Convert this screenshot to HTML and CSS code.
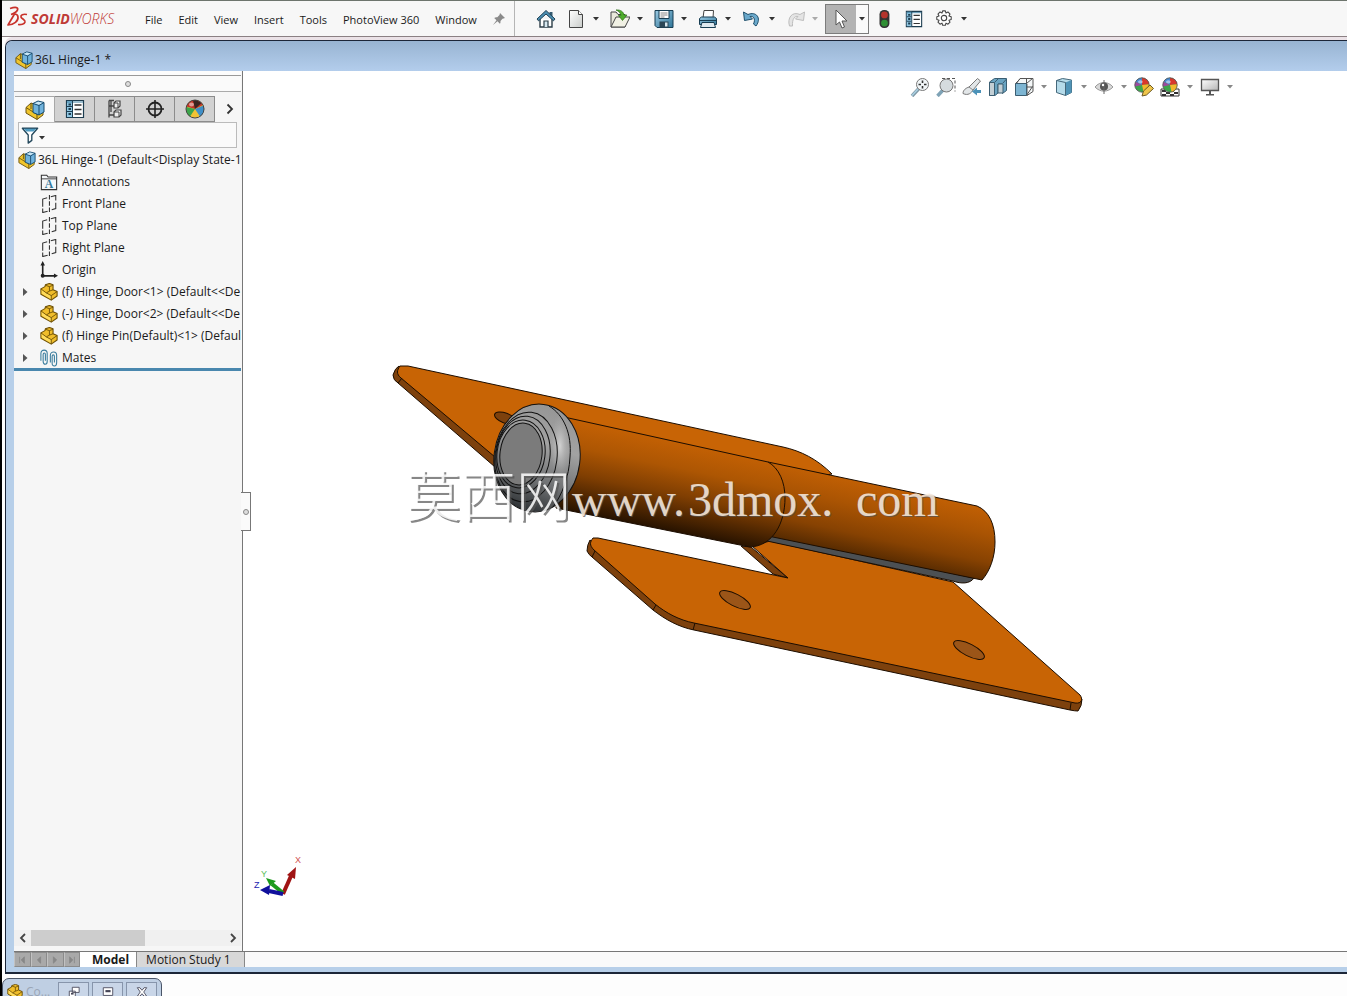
FILE: index.html
```
<!DOCTYPE html>
<html lang="en">
<head>
<meta charset="utf-8">
<title>SOLIDWORKS - 36L Hinge-1</title>
<link rel="stylesheet" href="styles.css">
</head>
<body>
<svg class="defs" aria-hidden="true">
  <defs>
    <linearGradient id="gPage" x1="0" y1="0" x2="1" y2="1"><stop offset="0" stop-color="#fff"/><stop offset="1" stop-color="#c9ccca"/></linearGradient>
    <linearGradient id="gBlue" x1="0" y1="0" x2="1" y2="1"><stop offset="0" stop-color="#9ccbe4"/><stop offset="1" stop-color="#2f7598"/></linearGradient>
    <linearGradient id="gScreen" x1="0" y1="0" x2="1" y2="1"><stop offset="0" stop-color="#fff"/><stop offset="1" stop-color="#b5b5b5"/></linearGradient>
    <symbol id="part" viewBox="0 0 20 20">
      <path d="M1 6.500L5.500 4l.5-2 4.500-1.500 4 1.500v5.500l4.500 2v5L12.500 19 1 12.500z" fill="#f0bd2a" stroke="#6d5006" stroke-width="1.200" stroke-linejoin="round"/>
      <path d="M1.800 7.500l5.200 3.500 5.500 3v4L2 12z" fill="#ffdc5c"/>
      <path d="M6 2.500l4.500 1.500v5L7 11 1 6.500M10.500 4l4-1.500M10.500 9l4-1.500M7 11l5.500 3 6.500-4.500M12.500 14v5" fill="none" stroke="#6d5006"/>
    </symbol>
    <symbol id="assembly" viewBox="0 0 20 20">
      <path d="M1 7.500L6 3l3 1v4l9 3v4l-6 4.500-11-6.500z" fill="#f0c52c" stroke="#6d5510" stroke-linejoin="round"/>
      <path d="M1 7.500l8 5 3 2v5M6 3v6" fill="none" stroke="#6d5510"/>
      <path d="M8 3.500l5-2.500 6 1.500v9.500l-5 3-6-2.500z" fill="#6fb2dc" stroke="#174a6c" stroke-linejoin="round"/>
      <path d="M8.800 3.700l4.300-2 5 1.200-4.500 2.200z" fill="#c9e6f5"/>
      <path d="M8 3.500l6 2 5-3M14 5.500V15" fill="none" stroke="#174a6c"/>
    </symbol>
    <symbol id="plane" viewBox="0 0 20 20">
      <path d="M3 13V4.500l5-1.500M12 2l5.500-1.500V6M17.500 8.500V15L13 16.500M8.500 18L3 19.500V15" fill="none" stroke="#333" stroke-width="1.200"/>
      <path d="M10.500 0v20" stroke="#333" stroke-width="1.200" stroke-dasharray="5 2"/>
    </symbol>
    <symbol id="list" viewBox="0 0 20 20">
      <path d="M1.500 1.500h17v17h-17z" fill="#fff" stroke="#1d3d50" stroke-width="1.200"/>
      <path d="M2 2h5.500v16H2z" fill="#8fc6e2"/>
      <path d="M2 3h16" stroke="#3c7ea0"/>
      <path d="M7.500 2v16M2 7.500h5M2 12.500h5" stroke="#1d3d50"/>
      <path d="M3.500 5.500H6M3.500 10H6M3.500 15H6" stroke="#1d3d50" stroke-width="2"/>
      <path d="M9.500 6h7M9.500 10.500h7M9.500 15h7" stroke="#333" stroke-width="1.300"/>
    </symbol>
    <symbol id="ball" viewBox="0 0 20 20">
      <circle cx="10" cy="10" r="9" fill="#3ca64b"/>
      <path d="M10 10L2 6a9 9 0 0 1 8-5z" fill="#4888d0"/>
      <path d="M10 10V1a9 9 0 0 1 9 8z" fill="#d8382c"/>
      <path d="M10 10l9-1a9 9 0 0 1-7 10z" fill="#f1b92c"/>
      <path d="M10 10L2 6a9 9 0 0 0-1 6z" fill="#9c4aa0"/>
      <ellipse cx="8" cy="6" rx="3" ry="2" fill="#fff" opacity=".5"/>
      <circle cx="10" cy="10" r="9" fill="none" stroke="#555"/>
    </symbol>
    <symbol id="ball-dark" viewBox="0 0 20 20">
      <circle cx="10" cy="10" r="9" fill="#f1c234"/>
      <path d="M10 10L1.500 7.500C3 3 6.500 1 10 1c3 0 6 1.500 8 5z" fill="#c23428"/>
      <path d="M10 10L8 1.500l3-.5 5.500 3z" fill="#3b2420"/>
      <path d="M10 10l8.500-3.500A9 9 0 0 1 15 17.500z" fill="#3f8fc8"/>
      <path d="M10 10L1.500 8A9 9 0 0 0 5 17.500z" fill="#3ca64b"/>
      <ellipse cx="6.500" cy="5.500" rx="2.500" ry="2" fill="#fff" opacity=".5"/>
      <circle cx="10" cy="10" r="9" fill="none" stroke="#444"/>
    </symbol>
    <symbol id="caret" viewBox="0 0 6 4"><path d="M0 0h6L3 3.500z" fill="currentColor"/></symbol>
    <symbol id="arrow-r" viewBox="0 0 6 8"><path d="M1 0l4.500 4L1 8z" fill="#555"/></symbol>
  </defs>
</svg>

<header class="menubar">
  <div class="brand">
    <svg class="brand-mark" viewBox="0 0 22 22"><g fill="none" stroke="#c8322b" stroke-width="1.700" stroke-linejoin="round"><path d="M4 2.500c6-2 8.500-1 7.500 1.500-1 2-3.500 3.500-6.500 4.500"/><path d="M8.500 8L2 19c6-.5 10.500-4 10-8-.2-2-1.500-3-3.500-3"/><path d="M21 8.500c-4-.7-6.500.3-6 2.500.5 2 4.500 2.500 4 5-.5 2-4 3-7 2.500"/></g></svg>
    <span class="brand-name"><b>SOLID</b>WORKS</span>
  </div>
  <nav class="menus">
    <button>File</button><button>Edit</button><button>View</button><button>Insert</button><button>Tools</button><button>PhotoView 360</button><button>Window</button>
  </nav>
  <button class="pin" aria-label="Pin menu"><svg viewBox="0 0 14 14"><path d="M8 1l5 5-1.500.5-1 .2L8.500 9c0 1.500 0 2-.6 2.800L5.500 9.300 1 13l3.500-4.800L2.200 6C3.500 5 4 5 5.300 5.300L7.500 3z" fill="#8a8a8a"/></svg></button>
  <div class="tools">
    <button class="ico home" aria-label="Home"><svg viewBox="0 0 20 20"><path d="M4 10v8h12v-8" fill="#fff" stroke="#2c3e48" stroke-width="1.400"/><path d="M8 18v-6h4v6" fill="#d7e8f0" stroke="#2c3e48" stroke-width="1.200"/><path d="M13.500 3h3v5h-3z" fill="#355a70"/><path d="M10 1.500L19 10l-1.500 1.800L10 5l-7.500 6.800L1 10z" fill="#4d8fb2" stroke="#1f4256"/></svg></button>
    <div class="pair"><button class="ico" aria-label="New"><svg viewBox="0 0 20 20"><path d="M3.500 1.500h9l4 4v13h-13z" fill="url(#gPage)" stroke="#444"/><path d="M12.500 1.500v4h4" fill="#fff" stroke="#444"/></svg></button><button class="drop" aria-label="New options"><svg><use href="#caret"/></svg></button></div>
    <div class="pair"><button class="ico" aria-label="Open"><svg viewBox="0 0 20 20"><path d="M1 18V3h5l2 2.500h7V18z" fill="#e9e9dc" stroke="#444"/><path d="M1 18L6 8h14l-5 10z" fill="#f1f1e4" stroke="#444" stroke-linejoin="round"/><path d="M6 1c5-.5 7.500 2 8 5h3l-4.500 5.500L8.500 6.500H11C10.500 4 9 2 6 1z" fill="#4fae2c" stroke="#2b7015" stroke-width=".7"/></svg></button><button class="drop" aria-label="Open options"><svg><use href="#caret"/></svg></button></div>
    <div class="pair"><button class="ico" aria-label="Save"><svg viewBox="0 0 20 20"><path d="M1 1.500h18v17H3l-2-2z" fill="url(#gBlue)" stroke="#173d52"/><path d="M5 1.500h10v8H5z" fill="#fff" stroke="#173d52"/><path d="M6.500 4h7M6.500 6h7M6.500 8h4" stroke="#888"/><path d="M5.500 12.500h9v6h-9z" fill="#2b4656"/><path d="M11 13.500h2.500v4H11z" fill="#d6e6ee"/></svg></button><button class="drop" aria-label="Save options"><svg><use href="#caret"/></svg></button></div>
    <div class="pair"><button class="ico" aria-label="Print"><svg viewBox="0 0 20 20"><path d="M5 9l1-7.500h9.500L15 9z" fill="#fff" stroke="#444"/><path d="M1.500 9.500l2-1.500h13l2 1.500v6h-17z" fill="url(#gBlue)" stroke="#173d52"/><path d="M4 13.500h12l1.500 5h-15z" fill="#dfeaf0" stroke="#173d52"/><path d="M2 11.500h16" stroke="#173d52"/></svg></button><button class="drop" aria-label="Print options"><svg><use href="#caret"/></svg></button></div>
    <div class="pair"><button class="ico" aria-label="Undo"><svg viewBox="0 0 20 20"><path d="M1.500 3l1 8.500 8-1.500-2.500-2.500c3-.8 6 2 3.500 7.500l2.500 2C20 9 14 2 6 5.500z" fill="#6aa9cc" stroke="#1f4f6b" stroke-linejoin="round"/></svg></button><button class="drop" aria-label="Undo options"><svg><use href="#caret"/></svg></button></div>
    <div class="pair off"><button class="ico" aria-label="Redo" disabled><svg viewBox="0 0 20 20"><path d="M18.500 3l-1 8.500-8-1.500L12 7.500C9 6.700 6 9.500 6.500 17h-3C1 9 6 2 14 5.500z" fill="#e4e4e4" stroke="#bdbdbd" stroke-linejoin="round"/></svg></button><button class="drop" aria-label="Redo options" disabled><svg><use href="#caret"/></svg></button></div>
    <div class="select-box"><button class="ico" aria-label="Select"><svg viewBox="0 0 20 20"><path d="M5 1v15l3.500-3 2.500 6 2.500-1-2.500-6h5z" fill="#fff" stroke="#555"/></svg></button><button class="drop" aria-label="Select options"><svg><use href="#caret"/></svg></button></div>
    <div class="extra">
      <button class="ico" aria-label="Rebuild"><svg viewBox="0 0 20 20"><rect x="5" y="0" width="11" height="20" rx="5" fill="#333"/><circle cx="10.500" cy="5.500" r="3.800" fill="#b5342c"/><circle cx="10.500" cy="14.500" r="3.800" fill="#2f8f34"/></svg></button>
      <button class="ico" aria-label="File properties"><svg><use href="#list"/></svg></button>
      <span class="pair"><button class="ico" aria-label="Options"><svg viewBox="0 0 20 20"><path d="M8.500 1h3l.7 2.400 2.200-1.200 2.300 2.300-1.200 2.200 2.500.8v3l-2.500.8 1.200 2.200-2.300 2.300-2.200-1.200-.7 2.400h-3l-.7-2.400-2.200 1.200-2.300-2.300 1.200-2.200L2 10.500v-3l2.500-.8-1.200-2.200 2.300-2.300 2.200 1.200z" fill="#fff" stroke="#444" stroke-width="1.200" stroke-linejoin="round"/><circle cx="10" cy="9" r="3" fill="#fff" stroke="#444" stroke-width="1.200"/></svg></button><button class="drop" aria-label="Options menu"><svg><use href="#caret"/></svg></button></span>
    </div>
  </div>
</header>

<main class="window">
  <div class="titlebar"><svg><use href="#assembly"/></svg><h1>36L Hinge-1 *</h1></div>
  <div class="content">
    <aside class="panel">
      <div class="edge"></div>
      <div class="grip"><i></i></div>
      <div class="tabs" role="tablist">
        <button class="tab active" aria-label="Feature tree"><svg><use href="#assembly"/></svg></button>
        <button class="tab" aria-label="Property manager"><svg><use href="#list"/></svg></button>
        <button class="tab" aria-label="Configurations"><svg viewBox="0 0 20 20"><path d="M4 1.500h5M4 1.500v17M4 7h5M4 16h5M6 1.500V13" stroke="#444" fill="none" stroke-width="1.300"/><path d="M9 4l2-2h4v5l-2 2H9zM9 13l2-2h5v5l-2 2H9z" fill="#eee" stroke="#444" stroke-width="1.200"/><path d="M9 4h4v5M9 13h5v5" fill="none" stroke="#444"/></svg></button>
        <button class="tab" aria-label="Dimensions"><svg viewBox="0 0 20 20"><circle cx="10" cy="10" r="6.500" fill="none" stroke="#222" stroke-width="1.800"/><path d="M10 1v18M1 10h18" stroke="#222" stroke-width="1.600"/></svg></button>
        <button class="tab" aria-label="Display"><svg><use href="#ball-dark"/></svg></button>
        <button class="more" aria-label="More tabs"><svg viewBox="0 0 8 12"><path d="M1.500 1.500L6 6l-4.500 4.500" fill="none" stroke="#333" stroke-width="1.800"/></svg></button>
      </div>
      <label class="filter"><svg class="funnel" viewBox="0 0 20 20"><path d="M1.500 2.500h17L12 10v6l-4 3v-9z" fill="#fff" stroke="#24485c" stroke-width="1.500" stroke-linejoin="round"/><path d="M3 3h14l-3 3H6z" fill="#4f9cc2"/></svg><svg class="car"><use href="#caret"/></svg><input type="text" aria-label="Filter tree"></label>
      <ul class="tree">
        <li class="root"><svg class="n"><use href="#assembly"/></svg><span>36L Hinge-1 (Default&lt;Display State-1</span></li>
        <li><b></b><svg class="n" viewBox="0 0 20 20"><path d="M1.500 18.500v-16h6l1.500 2h9.500v14z" fill="#f4f7f9" stroke="#333" stroke-width="1.200"/><path d="M1.500 6.500h17" stroke="#333"/><text x="10" y="17" class="a-mark">A</text></svg><span>Annotations</span></li>
        <li><b></b><svg class="n"><use href="#plane"/></svg><span>Front Plane</span></li>
        <li><b></b><svg class="n"><use href="#plane"/></svg><span>Top Plane</span></li>
        <li><b></b><svg class="n"><use href="#plane"/></svg><span>Right Plane</span></li>
        <li><b></b><svg class="n" viewBox="0 0 20 20"><path d="M3 4v12.500h13" fill="none" stroke="#222" stroke-width="1.800"/><path d="M3 0l2.500 5h-5zM20 16.500L15.500 14v5z" fill="#222"/><circle cx="3" cy="16.500" r="2.200" fill="#222"/></svg><span>Origin</span></li>
        <li><b><svg><use href="#arrow-r"/></svg></b><svg class="n"><use href="#part"/></svg><span>(f) Hinge, Door&lt;1&gt; (Default&lt;&lt;De</span></li>
        <li><b><svg><use href="#arrow-r"/></svg></b><svg class="n"><use href="#part"/></svg><span>(-) Hinge, Door&lt;2&gt; (Default&lt;&lt;De</span></li>
        <li><b><svg><use href="#arrow-r"/></svg></b><svg class="n"><use href="#part"/></svg><span>(f) Hinge Pin(Default)&lt;1&gt; (Defaul</span></li>
        <li><b><svg><use href="#arrow-r"/></svg></b><svg class="n" viewBox="0 0 20 20"><g fill="none" stroke="#3a7d9e" stroke-width="1.200"><path d="M1 13V5c0-5 7-5 7 0v9c0 4-4.500 4-4.500 0V6c0-2 2.500-2 2.500 0v7"/><path d="M11.500 15V7c0-5 7-5 7 0v8c0 5-5 5-5 1V8c0-2 2.500-2 2.500 0v7"/></g></svg><span>Mates</span></li>
      </ul>
      <div class="hscroll">
        <button aria-label="Scroll left"><svg viewBox="0 0 8 10"><path d="M6 1L2 5l4 4" fill="none" stroke="#444" stroke-width="1.800"/></svg></button>
        <div class="track"><div class="thumb"></div></div>
        <button aria-label="Scroll right"><svg viewBox="0 0 8 10"><path d="M2 1l4 4-4 4" fill="none" stroke="#444" stroke-width="1.800"/></svg></button>
      </div>
    </aside>
    <section class="viewport">
      <button class="splitter" aria-label="Collapse panel"><i></i></button>
      <div class="hud">
        <button class="ico" aria-label="Zoom to fit"><svg viewBox="0 0 20 20"><path d="M2 19l6.500-7" stroke="#7f98a6" stroke-width="3.500"/><path d="M2 18.500l6-6.500" stroke="#a9d0e2" stroke-width="1.500"/><circle cx="12.500" cy="7.500" r="6" fill="#f1f6f8" stroke="#777"/><path d="M12.500 3.500v8M8.500 7.500h8" stroke="#333" stroke-width="1.600" stroke-dasharray="2.500 3"/></svg></button>
        <button class="ico" aria-label="Zoom to area"><svg viewBox="0 0 20 20"><path d="M6 1.500h13v13" fill="none" stroke="#555" stroke-dasharray="3 2"/><path d="M1.500 19L7 13" stroke="#7fa3b6" stroke-width="3.500"/><circle cx="10.500" cy="8.500" r="6.500" fill="#d5dbde" stroke="#777"/></svg></button>
        <button class="ico" aria-label="Previous view"><svg viewBox="0 0 20 20"><path d="M1 16.500C1 13 4 11 7 10l8.500-8.500 3 2.500L11 13c-1.500 3-5 6-10 3.500z" fill="#e2e6e8" stroke="#777"/><path d="M7 10l4 3" stroke="#888"/><path d="M10 14.500l5-4v2.500h4v3h-4v2.500z" fill="#4c92b8"/></svg></button>
        <button class="ico" aria-label="Section view"><svg viewBox="0 0 20 20"><path d="M1.500 5l5-3.500h12v12l-4 3V7H10v9l-3 2.500H1.500z" fill="#6aa4c2" stroke="#3b5e72"/><path d="M1.500 5.500h5v13h-5zM10 7h5v9h-5z" fill="#c3cfd5" stroke="#3b5e72"/><path d="M6.500 5.500l4-4M15 6l3.500-4" stroke="#3b5e72"/></svg></button>
        <button class="ico" aria-label="View orientation"><svg viewBox="0 0 20 20"><path d="M6 1.500h13v13l-6 4V7H2z" fill="#f4f7f8" stroke="#555"/><path d="M1.500 6.500h11v12h-11z" fill="#7db5d2" stroke="#3b5e72"/><path d="M12.500 1.500v5M12.500 10H19M1.500 6.500l5-5M12.500 6.500l6-5M12.500 18.500l6-9" fill="none" stroke="#555"/></svg></button><button class="drop" aria-label="Orientation options"><svg><use href="#caret"/></svg></button>
        <button class="ico" aria-label="Display style"><svg viewBox="0 0 20 20"><path d="M2.500 3.500l6-2 9 1.500v12.500l-6 3-9-3z" fill="#b5dbea" stroke="#45687b"/><path d="M11.500 5.500l6-2.500v12.500l-6 3z" fill="#4f93b6"/><path d="M2.500 3.500l9 2v13" fill="none" stroke="#45687b"/></svg></button><button class="drop" aria-label="Display style options"><svg><use href="#caret"/></svg></button>
        <button class="ico" aria-label="Hide or show items"><svg viewBox="0 0 20 20"><path d="M1 10c5-6 13-6 18 0-5 5.500-13 5.500-18 0z" fill="#d8d8d8" stroke="#999"/><circle cx="10" cy="9.500" r="4" fill="#555"/><path d="M10 3v14" stroke="#666"/><circle cx="9" cy="8" r="1.200" fill="#fff"/></svg></button><button class="drop" aria-label="Hide or show options"><svg><use href="#caret"/></svg></button>
        <button class="ico" aria-label="Edit appearance"><svg viewBox="0 0 20 20"><use href="#ball" width="16" height="16"/><path d="M8 19l1.500-5L16 8l3.500 3.500L12.500 18z" fill="#efc54b" stroke="#6c5a23"/></svg></button>
        <button class="ico" aria-label="Apply scene"><svg viewBox="0 0 20 20"><path d="M1 12h18v7H1z" fill="#fff" stroke="#333"/><path d="M2 13h4v2H2zm8 0h4v2h-4zm-4 2h4v2H6zm8 0h4v2h-4zM2 17h4v2H2zm8 0h4v2h-4z" fill="#333"/><use href="#ball" x="2" width="16" height="16"/></svg></button><button class="drop" aria-label="Scene options"><svg><use href="#caret"/></svg></button>
        <button class="ico" aria-label="View settings"><svg viewBox="0 0 20 20"><path d="M1.500 2.500h17v11h-17z" fill="url(#gScreen)" stroke="#555" stroke-width="1.300"/><path d="M9 14h2v3h3v1.500H6V17h3z" fill="#555"/></svg></button><button class="drop" aria-label="View settings options"><svg><use href="#caret"/></svg></button>
      </div>
      <svg class="scene" viewBox="243 71 1104 880" role="img" aria-label="Hinge assembly">
        <defs>
          <linearGradient id="cylA" gradientUnits="userSpaceOnUse" x1="676" y1="440" x2="658" y2="528"><stop offset="0" stop-color="#c46104"/><stop offset=".3" stop-color="#ad5603"/><stop offset=".6" stop-color="#7f3e02"/><stop offset="1" stop-color="#281300"/></linearGradient>
          <linearGradient id="cylB" gradientUnits="userSpaceOnUse" x1="890" y1="484" x2="873" y2="562"><stop offset="0" stop-color="#c46104"/><stop offset=".35" stop-color="#aa5403"/><stop offset=".7" stop-color="#874202"/><stop offset="1" stop-color="#4f2701"/></linearGradient>
          <linearGradient id="cap" gradientUnits="userSpaceOnUse" x1="560" y1="408" x2="535" y2="512"><stop offset="0" stop-color="#969696"/><stop offset=".35" stop-color="#a2a2a2"/><stop offset=".7" stop-color="#707274"/><stop offset="1" stop-color="#2f3336"/></linearGradient>
          <radialGradient id="shine"><stop offset="0" stop-color="#d2d2d2"/><stop offset="1" stop-color="#aaa" stop-opacity="0"/></radialGradient>
        </defs>
        <g class="solid">
          <path class="side" d="M399 366q-4 2-6 9 0 5 5 8l97 84v-12l-90-84z"/>
          <path class="face" d="M400 366h8l375 81c18 4 34 12 49 27l-60 10-277-27-94-79c-5-4-4-8-1-12z"/>
          <path d="M402 378l-4 5" fill="none"/>
          <ellipse class="side" cx="505" cy="418" rx="11" ry="5" transform="rotate(20 505 418)"/>
          <path class="side" d="M741 546l10 1 37 31-15-4z"/>
          <path class="side" d="M590 540q-3 5-3 11 2 4 5 6l61 53c13 10 26 17 41 20l376 80q5 1 8 1 4-5 4-12l-388-79z"/>
          <path class="face" d="M593 538h5l190 40-36-32 18-5 183 41 127 113c3 4 2 9-5 8l-381-80c-15-3-28-10-39-19l-61-54c-5-5-4-8-1-12z"/>
          <path d="M595 551l-3 6M656 605l-3 5M695 623l-2 7M1071 703l-1 7" fill="none"/>
          <g class="hole"><ellipse cx="735" cy="600" rx="17" ry="6" transform="rotate(27 735 600)"/><ellipse cx="969" cy="650" rx="17" ry="6" transform="rotate(27 969 650)"/></g>
          <path d="M768 534l206 44c-4 6-13 6-21 3l-186-40z" fill="#4c5053"/>
          <path d="M768 462l209 44c12 5 18 18 18 36 0 15-5 29-13 38l-214-44z" fill="url(#cylB)"/>
          <path d="M564 417l204 45c11 6 17 20 17 36 0 25-12 48-35 49l-194-39z" fill="url(#cylA)"/>
        </g>
        <g class="cap">
          <ellipse cx="537" cy="458" rx="43" ry="54" transform="rotate(7 537 458)" fill="url(#cap)"/>
          <ellipse class="glow" cx="560" cy="446" rx="10" ry="32" fill="url(#shine)"/>
          <path d="M549 406c15 9 23 28 21 51-1 20-8 38-17 50" fill="none"/>
          <ellipse cx="526" cy="457" rx="31" ry="45" transform="rotate(7 526 457)" fill="none"/>
          <ellipse cx="523" cy="455" rx="27" ry="39" transform="rotate(7 523 455)" fill="none"/>
          <ellipse cx="521" cy="454" rx="24" ry="34" transform="rotate(7 521 454)" fill="none"/>
          <ellipse cx="521" cy="454" rx="21" ry="31" transform="rotate(7 521 454)" fill="#7b7b7b"/>
        </g>
        <g class="mark shade"><text class="cjk" x="408" y="518">莫西网</text><text x="573" y="517">www.</text><text x="689" y="517">3dmox.</text><text x="857" y="517">com</text></g>
        <g class="mark lit"><text class="cjk" x="406" y="516">莫西网</text><text x="572" y="516">www.</text><text x="688" y="516">3dmox.</text><text x="856" y="516">com</text></g>
        <g class="triad">
          <path d="M283 894l8-18" stroke="#a01414" stroke-width="4"/><path d="M296 867l-9 8 8 4z" fill="#a01414"/>
          <path d="M283 893l-11-9" stroke="#1c9a1c" stroke-width="4"/><path d="M266 878l4 8 6-5z" fill="#1c9a1c"/>
          <path d="M283 894l-14-3" stroke="#10109c" stroke-width="4"/><path d="M260 890l10-5-1 10z" fill="#10109c"/>
          <text x="295" y="863" fill="#d05050">X</text><text x="261" y="877" fill="#5ac05a">Y</text><text x="254" y="888" fill="#1c1cb0">Z</text>
        </g>
      </svg>
    </section>
  </div>
  <footer class="sheets">
    <div class="nav"><button aria-label="First"><svg viewBox="0 0 10 10"><path d="M2 1v8M8 1L4 5l4 4z"/></svg></button><button aria-label="Previous"><svg viewBox="0 0 10 10"><path d="M7 1L3 5l4 4z"/></svg></button><button aria-label="Next"><svg viewBox="0 0 10 10"><path d="M3 1l4 4-4 4z"/></svg></button><button aria-label="Last"><svg viewBox="0 0 10 10"><path d="M8 1v8M2 1l4 4-4 4z"/></svg></button></div>
    <button class="sheet active">Model</button><button class="sheet">Motion Study 1</button>
  </footer>
</main>

<div class="dock">
  <div class="mini">
    <svg class="n"><use href="#part"/></svg><span>Co...</span>
    <button aria-label="Restore"><svg viewBox="0 0 14 14"><path d="M5 1.500h8v6H5zM1.500 6h7v6.500h-7z" fill="#fff" stroke="#445"/><path d="M3.500 9h3" stroke="#445" stroke-width="2"/></svg></button>
    <button aria-label="Maximize"><svg viewBox="0 0 14 14"><path d="M1.500 2h11v9h-11z" fill="#fff" stroke="#445"/><path d="M4 6h6" stroke="#445" stroke-width="2.500"/></svg></button>
    <button aria-label="Close"><svg viewBox="0 0 14 14"><path d="M1.500 2h3L7 5l2.500-3h3L9 7l3.500 5h-3L7 9l-2.500 3h-3L5 7z" fill="#fff" stroke="#445"/></svg></button>
  </div>
</div>
</body>
</html>
```
FILE: styles.css
```
* { box-sizing: border-box; }
body {
  margin: 0;
  height: 100vh;
  display: flex;
  flex-direction: column;
  overflow: hidden;
  border-left: 2px solid #000;
  background: #fdfdfd;
  color: #1a1a1a;
  font: 12px/16px "Open Sans", "Noto Sans", sans-serif;
}
button {
  margin: 0;
  padding: 0;
  border: 0;
  background: none;
  color: inherit;
  font: inherit;
  display: flex;
  align-items: center;
  justify-content: center;
}
.defs { position: absolute; width: 0; height: 0; }

/* menu bar */
.menubar {
  display: flex;
  align-items: stretch;
  height: 37px;
  flex: none;
  border-top: 1px solid #6d756d;
  border-bottom: 1px solid #8b8083;
  background: #f7f7f7;
}
.brand { display: flex; align-items: center; width: 135px; padding-left: 4px; gap: 3px; flex: none; }
.brand-mark { width: 22px; height: 22px; margin-bottom: 4px; }
.brand-name { color: #bf3a36; font: italic 300 14px/16px "Open Sans", sans-serif; }
.brand-name b { font-weight: 700; }
.menus { display: flex; align-items: center; }
.menus button { height: 24px; padding: 2px 8px 0; font-size: 11px; white-space: nowrap; }
.pin { width: 28px; }
.pin svg { width: 14px; height: 14px; }
.tools {
  display: flex;
  align-items: center;
  gap: 3px;
  flex: 1;
  margin-left: 1px;
  padding-left: 19px;
  border-left: 1px solid #b5b5b5;
}
.ico { width: 24px; height: 28px; }
.ico svg { width: 20px; height: 20px; }
.home { margin-right: 3px; }
.pair, .extra, .select-box { display: flex; align-items: center; }
.drop { width: 17px; height: 28px; color: #333; }
.drop svg { width: 6px; height: 4px; }
.off .drop { width: 14px; color: #aaa; }
.select-box { border: 1px solid #7c7c7c; background: #fafafa; }
.select-box .ico { width: 30px; background: #b3b3b3; }
.select-box .drop { width: 12px; }
.extra { gap: 6px; }
.extra .ico svg { width: 18px; height: 18px; }

/* document window */
.window {
  display: flex;
  flex-direction: column;
  flex: 1;
  min-height: 0;
  margin: 3px 0 0 3px;
  padding: 0 0 5px 8px;
  border: 1px solid #1c2638;
  border-right: 0;
  border-bottom-width: 2px;
  border-top-left-radius: 7px;
  background: #b7cfe9;
  box-shadow: 0 -3px #ebe2e7;
}
.titlebar {
  display: flex;
  align-items: center;
  gap: 2px;
  height: 30px;
  flex: none;
  margin-left: -8px;
  padding: 8px 0 0 9px;
  border-top-left-radius: 7px;
  background: linear-gradient(#98b4d2, #b3cdec);
}
.titlebar svg { width: 18px; height: 18px; }
h1 { margin: 0; font: inherit; }
.content { display: flex; flex: 1; min-height: 0; }

/* feature panel */
.panel {
  display: flex;
  flex-direction: column;
  width: 229px;
  flex: none;
  padding-right: 1px;
  border-right: 1px solid #777;
  background: #f6f6f6;
}
.edge { height: 5px; background: #fcfcfc; border-bottom: 1px solid #999; }
.grip { display: flex; align-items: center; justify-content: center; height: 16px; border-bottom: 1px solid #aaa; background: #fafafa; }
.grip i, .splitter i { width: 6px; height: 6px; border: 1px solid #888; border-radius: 50%; background: #ddd; }
.tabs { display: flex; height: 26px; margin-top: 4px; padding-left: 1px; flex: none; }
.tab { width: 40px; border: 1px solid #8c8c8c; border-left: 0; background: #d2d2d2; }
.tab.active { background: #fafafa; border-bottom: 0; border-color: #a8a8a8; }
.tab svg { width: 20px; height: 20px; }
.more { flex: 1; padding-left: 3px; }
.more svg { width: 8px; height: 12px; }
.filter {
  display: flex;
  align-items: center;
  height: 26px;
  flex: none;
  margin: 0 4px 1px;
  padding-left: 2px;
  border: 1px solid #bbb;
  background: #fafafa;
}
.filter input { flex: 1; min-width: 0; border: 0; background: none; font: inherit; }
.funnel { width: 18px; height: 20px; }
.car { width: 6px; height: 4px; margin-top: 6px; color: #333; }
.tree {
  margin: 0;
  padding: 0 0 0 4px;
  list-style: none;
  overflow: hidden;
  border-bottom: 3px solid #4987ae;
  flex: none;
}
.tree li { display: flex; align-items: center; height: 22px; white-space: nowrap; }
.tree li:last-child { height: 21px; }
.tree li b { display: flex; width: 22px; padding-left: 4px; flex: none; }
.tree b svg { width: 6px; height: 8px; }
.tree .n { width: 18px; height: 18px; flex: none; margin-right: 4px; }
.tree .root .n { margin-right: 2px; }
.a-mark { font: bold 13px "Liberation Serif", serif; text-anchor: middle; fill: #33789c; }
.hscroll { display: flex; height: 16px; flex: none; margin-top: auto; margin-bottom: 5px; background: #f0f0f0; }
.hscroll button { width: 17px; }
.hscroll svg { width: 8px; height: 10px; }
.track { flex: 1; }
.thumb { width: 59%; height: 100%; background: #cdcdcd; }

/* graphics area */
.viewport { position: relative; flex: 1; min-width: 0; background: #fff; }
.scene { display: block; width: 100%; height: 100%; }
.splitter {
  position: absolute;
  left: -2px;
  top: 421px;
  width: 10px;
  height: 39px;
  border: 1px solid #777;
  border-left: 0;
  background: #fafafa;
}
.hud { position: absolute; top: 2px; right: 110px; display: flex; align-items: center; }
.hud .ico { width: 26px; }
.hud .drop { width: 14px; color: #888; }
.solid path, .solid ellipse, .cap path, .cap ellipse { stroke: #1c0d00; stroke-linejoin: round; }
.cap path, .cap ellipse { stroke: #111; }
.cap .glow { stroke: none; }
.face { fill: #c86405; }
.side { fill: #7d410d; }
.hole ellipse { fill: #9b5518; }
.mark text { font: 48px "Liberation Serif", serif; }
.mark .cjk { font: 300 55px "Noto Sans CJK SC", sans-serif; }
.shade { fill: #555; opacity: .7; }
.lit { fill: #fbeee0; opacity: .85; }
.lit .cjk { fill: #fff; }
.triad { fill: none; }
.triad text { font: 9px "Liberation Sans", sans-serif; }

/* sheet tabs */
.sheets { display: flex; height: 16px; flex: none; border-top: 1px solid #777; background: #fafafa; }
.nav { display: flex; width: 66px; background: #a9a9a9; }
.nav button { flex: 1; border: 1px solid #8b8b8b; border-left-color: #c2c2c2; }
.nav svg { width: 8px; height: 8px; fill: #888; stroke: #888; }
.sheet { padding: 0 13px 0 9px; background: #d8d8d8; border-right: 1px solid #888; line-height: 15px; }
.sheet.active { padding: 0 7px 0 12px; background: #fff; font-weight: 700; }

/* minimised document */
.dock { height: 22px; flex: none; padding-top: 4px; overflow: hidden; }
.mini {
  display: flex;
  align-items: center;
  gap: 3px;
  width: 160px;
  height: 28px;
  padding: 0 4px;
  border: 1px solid #4a5568;
  border-radius: 7px 7px 0 0;
  background: #bfcfe3;
}
.mini .n { width: 16px; height: 16px; flex: none; }
.mini span { flex: 1; color: #9aa5b5; white-space: nowrap; }
.mini button { width: 31px; height: 20px; flex: none; border: 1px solid #8795ab; background: #c9d6e8; }
.mini button svg { width: 12px; height: 12px; }
```
